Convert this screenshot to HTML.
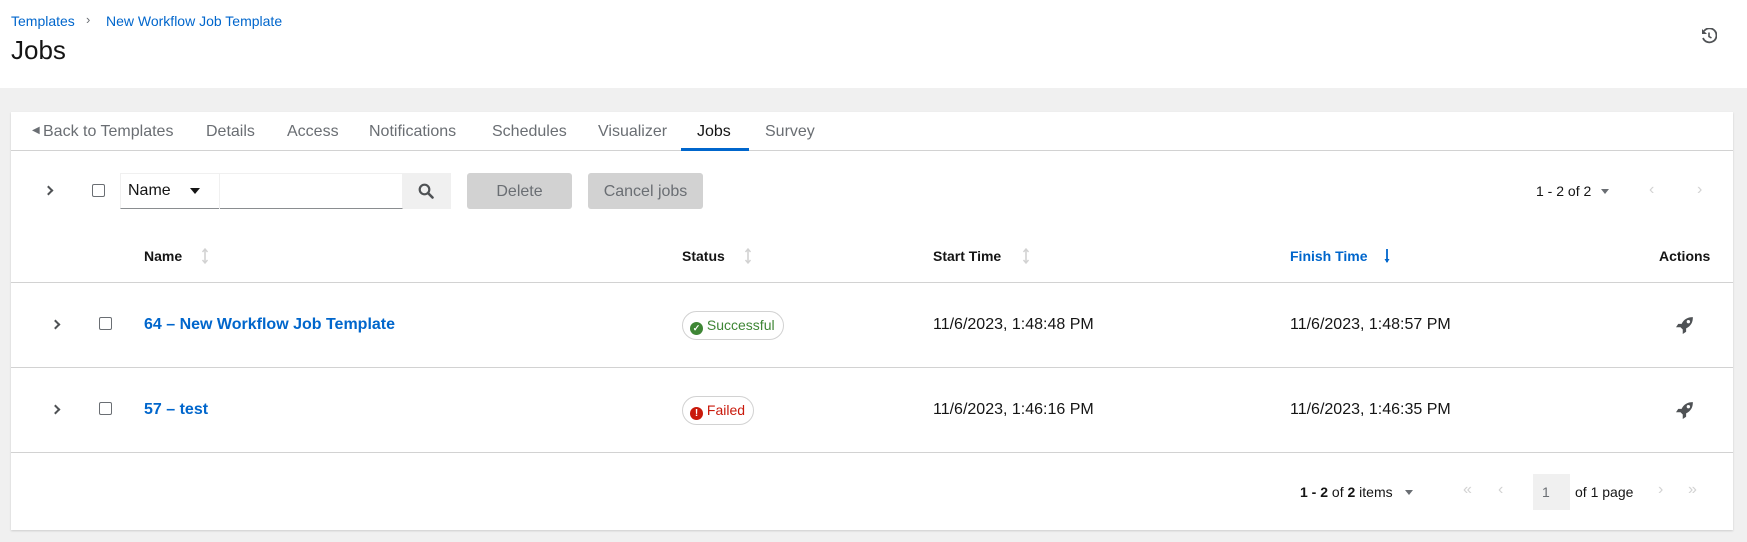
<!DOCTYPE html>
<html><head><meta charset="utf-8"><style>
*{box-sizing:border-box;margin:0;padding:0}
body{width:1747px;height:542px;background:#f0f0f0;font-family:"Liberation Sans",sans-serif;color:#151515;position:relative;overflow:hidden}
.a{position:absolute;white-space:nowrap}
.top{position:absolute;left:0;top:0;width:1747px;height:88px;background:#fff}
.card{position:absolute;left:11px;top:112px;width:1722px;height:418px;background:#fff;box-shadow:0 1px 2px rgba(0,0,0,.15)}
.blue{color:#0066cc}
.tab{font-size:16px;color:#6a6e73;top:123px}
.hl{position:absolute;left:11px;width:1722px;height:1px;background:#d2d2d2}
.cb{position:absolute;width:13px;height:13px;border:1px solid #6a6e73;border-radius:2px;background:#fff}
.th{font-size:14px;font-weight:bold;top:248px}
.td{font-size:16px}
.chev{position:absolute;width:7px;height:7px;border-right:2px solid #4f5255;border-top:2px solid #4f5255;transform:rotate(45deg)}
.badge{position:absolute;height:29px;border:1px solid #d2d2d2;border-radius:15px;font-size:14px;padding:0 8px 0 7px;line-height:27px;white-space:nowrap}
.sort{position:absolute}
</style></head><body>
<div class="top"></div>
<div class="a blue" style="left:11px;top:13px;font-size:14px">Templates</div>
<div class="a" style="left:86px;top:12px;font-size:13px;color:#6a6e73">›</div>
<div class="a blue" style="left:106px;top:13px;font-size:14px">New Workflow Job Template</div>
<div class="a" style="left:11px;top:35px;font-size:26px">Jobs</div>
<svg class="a" style="left:1701px;top:28px" width="16" height="16" viewBox="0 0 16 16"><path d="M3 3 A7 7 0 1 1 2 10" fill="none" stroke="#4f5255" stroke-width="1.8"/><path d="M1 1 L1 6 L6 6 Z" fill="#4f5255"/><path d="M8 4.5 V8.5 L10.5 10" fill="none" stroke="#4f5255" stroke-width="1.6"/></svg>

<div class="card"></div>
<div class="a tab" style="left:32px;top:125px;font-size:10px">◀</div>
<div class="a tab" style="left:43px">Back to Templates</div>
<div class="a tab" style="left:206px">Details</div>
<div class="a tab" style="left:287px">Access</div>
<div class="a tab" style="left:369px">Notifications</div>
<div class="a tab" style="left:492px">Schedules</div>
<div class="a tab" style="left:598px">Visualizer</div>
<div class="a tab" style="left:697px;color:#151515">Jobs</div>
<div class="a tab" style="left:765px">Survey</div>
<div class="hl" style="top:150px"></div>
<div class="a" style="left:681px;top:148px;width:68px;height:3px;background:#0066cc"></div>

<div class="chev" style="left:45px;top:187px"></div>
<div class="cb" style="left:92px;top:184px"></div>
<div class="a" style="left:120px;top:173px;width:283px;height:36px;border:1px solid #f0f0f0;border-bottom:1px solid #8a8d90"></div>
<div class="a" style="left:219px;top:173px;width:1px;height:36px;background:#f0f0f0"></div>
<div class="a" style="left:128px;top:182px;font-size:16px">Name</div>
<div class="a" style="left:190px;top:188px;width:0;height:0;border-left:5px solid transparent;border-right:5px solid transparent;border-top:6px solid #151515"></div>
<div class="a" style="left:403px;top:173px;width:48px;height:36px;background:#f0f0f0"></div>
<svg class="a" style="left:418px;top:183px" width="16" height="16" viewBox="0 0 16 16"><circle cx="6.5" cy="6.5" r="4.8" fill="none" stroke="#4f5255" stroke-width="2.2"/><path d="M10 10 L14.5 14.5" stroke="#4f5255" stroke-width="2.6" stroke-linecap="round"/></svg>
<div class="a" style="left:467px;top:173px;width:105px;height:36px;background:#d2d2d2;border-radius:3px;color:#6a6e73;font-size:16px;text-align:center;line-height:37px">Delete</div>
<div class="a" style="left:588px;top:173px;width:115px;height:36px;background:#d2d2d2;border-radius:3px;color:#6a6e73;font-size:16px;text-align:center;line-height:37px">Cancel jobs</div>
<div class="a" style="left:1536px;top:183px;font-size:14px">1 - 2 of 2</div>
<div class="a" style="left:1601px;top:189px;border-left:4px solid transparent;border-right:4px solid transparent;border-top:5px solid #6a6e73"></div>
<div class="a" style="left:1649px;top:181px;font-size:16px;color:#d2d2d2">‹</div>
<div class="a" style="left:1697px;top:181px;font-size:16px;color:#d2d2d2">›</div>

<svg width="0" height="0" style="position:absolute"><defs><g id="s"><path d="M4 1 V15" stroke="#d2d2d2" stroke-width="1.6"/><path d="M1.5 4 L4 1 L6.5 4 M1.5 12 L4 15 L6.5 12" fill="none" stroke="#d2d2d2" stroke-width="1.4"/></g></defs></svg>
<div class="a th" style="left:144px">Name</div>
<svg class="sort" style="left:201px;top:248px" width="8" height="16"><use href="#s"/></svg>
<div class="a th" style="left:682px">Status</div>
<svg class="sort" style="left:744px;top:248px" width="8" height="16"><use href="#s"/></svg>
<div class="a th" style="left:933px">Start Time</div>
<svg class="sort" style="left:1022px;top:248px" width="8" height="16"><use href="#s"/></svg>
<div class="a th blue" style="left:1290px">Finish Time</div>
<svg class="sort" style="left:1383px;top:248px" width="8" height="16"><path d="M4 1 V14" stroke="#0066cc" stroke-width="1.8"/><path d="M1.5 11 L4 15 L6.5 11" fill="#0066cc"/></svg>
<div class="a th" style="left:1659px">Actions</div>
<div class="hl" style="top:282px"></div>

<div class="chev" style="left:52px;top:321px"></div>
<div class="cb" style="left:99px;top:317px"></div>
<div class="a td blue" style="left:144px;top:316px;font-weight:bold">64 – New Workflow Job Template</div>
<div class="badge" style="left:682px;top:311px;color:#3e8635"><span style="display:inline-block;width:13px;height:13px;border-radius:50%;background:#3e8635;color:#fff;font-size:9px;line-height:13px;text-align:center;vertical-align:-1px;font-weight:bold">✓</span> Successful</div>
<div class="a td" style="left:933px;top:316px">11/6/2023, 1:48:48 PM</div>
<div class="a td" style="left:1290px;top:316px">11/6/2023, 1:48:57 PM</div>
<svg class="a" style="left:1676px;top:316px" width="18" height="18" viewBox="0 0 16 16"><path d="M15 1 C10 1 7 3 5 7 L2 7 L0 10 L4 10 L6 12 L6 16 L9 14 L9 11 C13 9 15 6 15 1 Z" fill="#4f5255"/><circle cx="11" cy="5" r="1.5" fill="#fff"/></svg>
<div class="hl" style="top:367px"></div>

<div class="chev" style="left:52px;top:406px"></div>
<div class="cb" style="left:99px;top:402px"></div>
<div class="a td blue" style="left:144px;top:401px;font-weight:bold">57 – test</div>
<div class="badge" style="left:682px;top:396px;color:#c9190b"><span style="display:inline-block;width:13px;height:13px;border-radius:50%;background:#c9190b;color:#fff;font-size:10px;line-height:13px;text-align:center;vertical-align:-1px;font-weight:bold">!</span> Failed</div>
<div class="a td" style="left:933px;top:401px">11/6/2023, 1:46:16 PM</div>
<div class="a td" style="left:1290px;top:401px">11/6/2023, 1:46:35 PM</div>
<svg class="a" style="left:1676px;top:401px" width="18" height="18" viewBox="0 0 16 16"><path d="M15 1 C10 1 7 3 5 7 L2 7 L0 10 L4 10 L6 12 L6 16 L9 14 L9 11 C13 9 15 6 15 1 Z" fill="#4f5255"/><circle cx="11" cy="5" r="1.5" fill="#fff"/></svg>
<div class="hl" style="top:452px"></div>

<div class="a" style="left:1300px;top:484px;font-size:14px"><b>1 - 2</b> of <b>2</b> items</div>
<div class="a" style="left:1405px;top:490px;border-left:4px solid transparent;border-right:4px solid transparent;border-top:5px solid #6a6e73"></div>
<div class="a" style="left:1463px;top:481px;font-size:16px;color:#d2d2d2">«</div>
<div class="a" style="left:1498px;top:481px;font-size:16px;color:#d2d2d2">‹</div>
<div class="a" style="left:1533px;top:474px;width:37px;height:36px;background:#f0f0f0;font-size:14px;color:#6a6e73;line-height:36px;padding-left:9px">1</div>
<div class="a" style="left:1575px;top:484px;font-size:14px">of 1 page</div>
<div class="a" style="left:1658px;top:481px;font-size:16px;color:#d2d2d2">›</div>
<div class="a" style="left:1688px;top:481px;font-size:16px;color:#d2d2d2">»</div>
</body></html>
